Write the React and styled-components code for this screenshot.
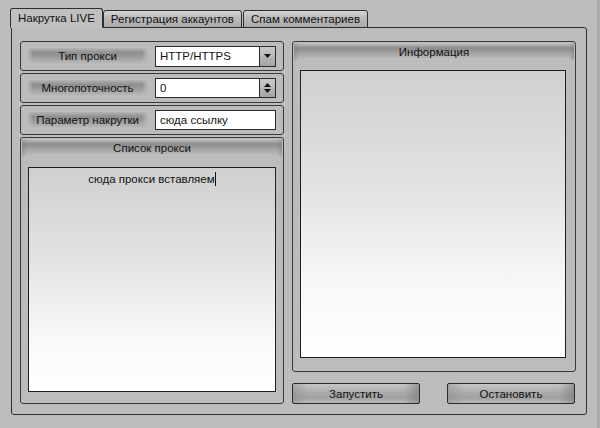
import React from 'react';
import styled, { createGlobalStyle } from 'styled-components';

const GlobalStyle = createGlobalStyle`
  html, body {
    margin: 0;
    padding: 0;
    background: #bcbcbc;
  }
  body {
    width: 600px;
    height: 428px;
    overflow: hidden;
    font-family: 'Liberation Sans', Arial, sans-serif;
    font-size: 11.5px;
    color: #111;
  }
`;

const Window = styled.div`
  box-sizing: border-box;
  width: 600px;
  height: 428px;
  padding: 8px 10px 13px 10px;
  display: flex;
  flex-direction: column;
  border-right: 3px solid #a9a9a9;
`;

const TabBar = styled.div`
  display: flex;
  align-items: flex-end;
  height: 20px;
  position: relative;
  z-index: 1;
  margin-bottom: -1px;
`;

const Tab = styled.div`
  box-sizing: border-box;
  height: ${p => (p.$active ? '20px' : '18px')};
  padding: 0 ${p => (p.$active ? '7px' : '7px')};
  margin-right: ${p => (p.$active ? '0' : '1px')};
  border: 1px solid #2e2e2e;
  border-bottom: ${p => (p.$active ? '1px solid #c0c0c0' : '1px solid #2e2e2e')};
  border-radius: 3px 3px 0 0;
  background: ${p =>
    p.$active
      ? '#c0c0c0'
      : 'linear-gradient(to bottom, #d4d4d4 0%, #bcbcbc 40%, #a9a9a9 100%)'};
  display: flex;
  align-items: center;
  white-space: nowrap;
  font-size: 11.5px;
  color: #111;
`;

const Pane = styled.div`
  flex: 1;
  margin-left: 1px;
  border: 1px solid #2e2e2e;
  border-radius: 0 3px 3px 3px;
  padding: 13px 10px 10px 8px;
  display: grid;
  grid-template-columns: 264px 1fr;
  column-gap: 8px;
  min-height: 0;
`;

const Column = styled.div`
  display: flex;
  flex-direction: column;
  gap: 2px;
  min-height: 0;
`;

const RowBox = styled.div`
  box-sizing: border-box;
  height: 30px;
  border: 1px solid #3a3a3a;
  border-radius: 3px;
  display: flex;
  align-items: center;
  padding: 0 7px 0 6px;
  gap: 7px;
`;

const LabelBar = styled.div`
  width: 121px;
  height: 16px;
  display: flex;
  align-items: center;
  justify-content: center;
  font-size: 11.5px;
  white-space: nowrap;
  background:
    linear-gradient(to right, #bcbcbc 0%, rgba(188,188,188,0) 5%, rgba(188,188,188,0) 95%, #bcbcbc 100%),
    linear-gradient(to bottom, #b4b4b4 0%, #8e8e8e 30%, #9e9e9e 60%, #bcbcbc 100%);
`;

const Field = styled.div`
  box-sizing: border-box;
  width: 121px;
  height: ${p => p.$h || 20}px;
  background: #fff;
  border: 1px solid #2a2a2a;
  display: flex;
  align-items: stretch;
  font-size: 11.5px;
`;

const FieldText = styled.div`
  flex: 1;
  display: flex;
  align-items: center;
  padding-left: 4px;
  white-space: nowrap;
`;

const FieldButton = styled.div`
  width: 15px;
  border-left: 1px solid #2a2a2a;
  background: linear-gradient(to bottom, #cacaca, #a4a4a4);
  display: flex;
  flex-direction: column;
  align-items: center;
  justify-content: center;
  gap: 2px;
`;

const Group = styled.div`
  box-sizing: border-box;
  flex: ${p => (p.$grow ? 1 : 'none')};
  border: 1px solid #3a3a3a;
  border-radius: 3px;
  display: flex;
  flex-direction: column;
  padding: 1px 1px 0 1px;
  min-height: 0;
`;

const GroupTitle = styled.div`
  height: 17px;
  display: flex;
  align-items: center;
  justify-content: center;
  font-size: 11.5px;
  border-radius: 2px 2px 0 0;
  background:
    linear-gradient(to right, rgba(120,120,120,0.4) 0%, rgba(188,188,188,0) 2%, rgba(188,188,188,0) 98%, rgba(120,120,120,0.4) 100%),
    linear-gradient(to bottom, #c4c4c4 0%, #8c8c8c 30%, #a4a4a4 60%, #c0c0c0 100%);
`;

const TextArea = styled.div`
  flex: 1;
  margin: ${p => p.$m};
  border: 1px solid #1e1e1e;
  background: linear-gradient(to bottom, #d0d0d0 0%, #e2e2e2 40%, #f8f8f8 75%, #ffffff 100%);
  font-size: 11.5px;
  text-align: center;
  padding-top: 4px;
`;

const Caret = styled.span`
  display: inline-block;
  width: 1px;
  height: 14px;
  background: #111;
  vertical-align: -3px;
`;

const ButtonRow = styled.div`
  display: flex;
  justify-content: space-between;
  margin-top: 9px;
  padding-right: 1px;
`;

const Button = styled.div`
  box-sizing: border-box;
  width: 128px;
  height: 21px;
  border: 1px solid #2a2a2a;
  border-radius: 2px;
  display: flex;
  align-items: center;
  justify-content: center;
  font-size: 11.5px;
  background:
    linear-gradient(to right, rgba(140,140,140,0.5) 0%, rgba(200,200,200,0) 12%, rgba(200,200,200,0) 88%, rgba(120,120,120,0.6) 100%),
    linear-gradient(to bottom, #c6c6c6 0%, #aeaeae 40%, #a0a0a0 70%, #bababa 100%);
`;

const Arrow = ({ up }) => (
  <svg width="7" height="4" viewBox="0 0 7 4">
    <path d={up ? 'M0 4 L3.5 0 L7 4 Z' : 'M0 0 L7 0 L3.5 4 Z'} fill="#111" />
  </svg>
);

export default function App() {
  return (
    <>
      <GlobalStyle />
      <Window>
        <TabBar>
          <Tab $active>Накрутка LIVE</Tab>
          <Tab>Регистрация аккаунтов</Tab>
          <Tab>Спам комментариев</Tab>
        </TabBar>
        <Pane>
          <Column>
            <RowBox>
              <LabelBar>Тип прокси</LabelBar>
              <Field $h={21}>
                <FieldText>HTTP/HTTPS</FieldText>
                <FieldButton>
                  <Arrow />
                </FieldButton>
              </Field>
            </RowBox>
            <RowBox>
              <LabelBar>Многопоточность</LabelBar>
              <Field $h={20}>
                <FieldText>0</FieldText>
                <FieldButton>
                  <Arrow up />
                  <Arrow />
                </FieldButton>
              </Field>
            </RowBox>
            <RowBox>
              <LabelBar>Параметр накрутки</LabelBar>
              <Field $h={20}>
                <FieldText>сюда ссылку</FieldText>
              </Field>
            </RowBox>
            <Group $grow>
              <GroupTitle>Список прокси</GroupTitle>
              <TextArea $m="11px 6px 11px 6px">
                сюда прокси вставляем<Caret />
              </TextArea>
            </Group>
          </Column>
          <Column>
            <Group $grow>
              <GroupTitle>Информация</GroupTitle>
              <TextArea $m="10px 8px 13px 6px" />
            </Group>
            <ButtonRow>
              <Button>Запустить</Button>
              <Button>Остановить</Button>
            </ButtonRow>
          </Column>
        </Pane>
      </Window>
    </>
  );
}
